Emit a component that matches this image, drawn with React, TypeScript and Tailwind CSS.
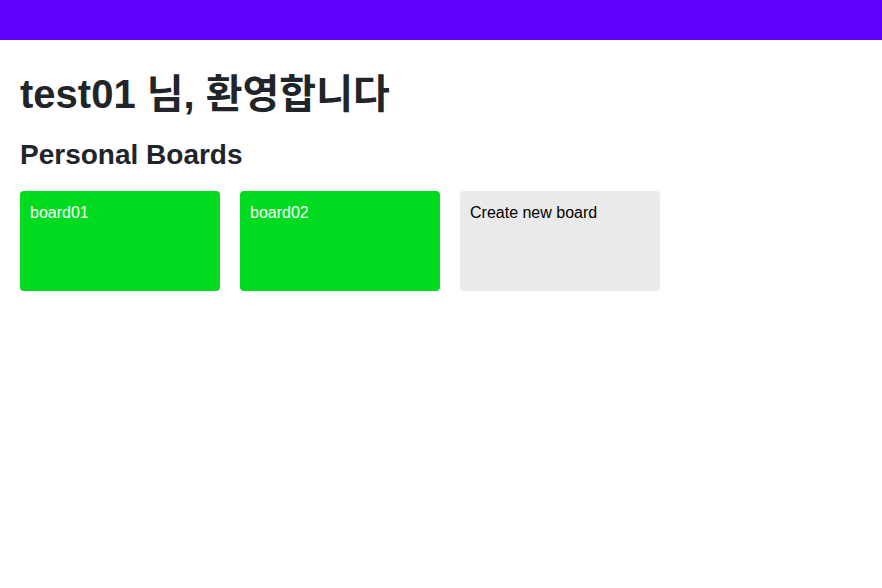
const boards = ["board01", "board02"];

export default function App() {
  return (
    <div className="min-h-screen bg-white font-['Liberation_Sans','Noto_Sans_CJK_KR',sans-serif]">
      <header className="h-10 w-full bg-[#6100ff]" />

      <main className="px-5">
        <h1 className="mt-8 text-[40px] font-bold leading-[45px] text-[#212529]">
          test01 님, 환영합니다
        </h1>
        <h2 className="mt-[22px] text-[28px] font-bold leading-[31px] text-[#212529]">
          Personal Boards
        </h2>

        <div className="mt-[21px] flex gap-5">
          {boards.map((name) => (
            <div
              key={name}
              className="h-[100px] w-[200px] rounded bg-[#00db1f] p-[10px] text-base leading-6 text-white"
            >
              {name}
            </div>
          ))}
          <div className="h-[100px] w-[200px] rounded bg-[#eaeaea] p-[10px] text-base leading-6 text-black">
            Create new board
          </div>
        </div>
      </main>
    </div>
  );
}
